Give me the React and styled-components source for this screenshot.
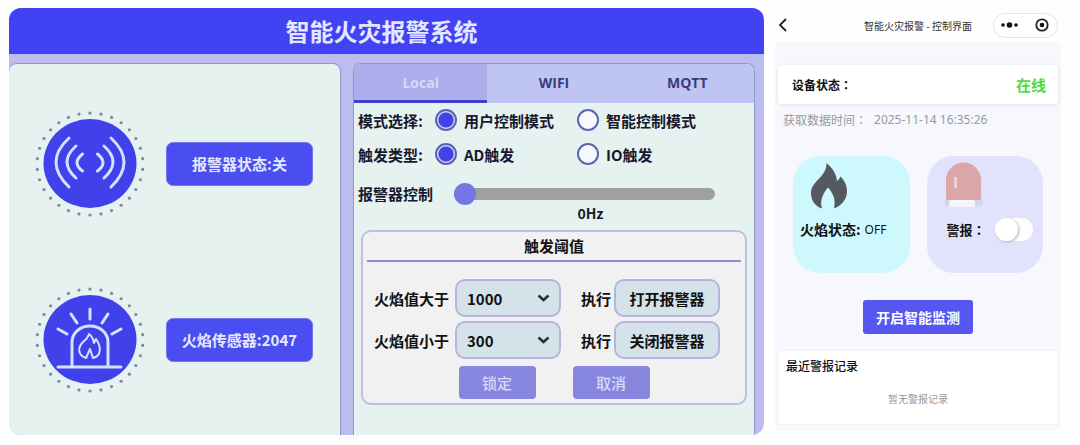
import React, { useState } from 'react';
import styled, { createGlobalStyle } from 'styled-components';

const GlobalStyle = createGlobalStyle`
    * {
        box-sizing: border-box;
    }
    body {
        margin: 0;
        background: #fefefe;
        font-family: 'Noto Sans CJK SC', sans-serif;
        color: #16182e;
    }
    button, input, select {
        margin: 0;
        padding: 0;
        border: 0;
        font-family: inherit;
        color: inherit;
    }
    h1, h2, p {
        margin: 0;
    }
`;

const Page = styled.main`
    display: grid;
    grid-template-columns: 755fr 286fr;
    gap: 11px;
    min-height: 100vh;
    padding: 8px 19px 10px 9px;
`;

/* desktop panel */

const Desktop = styled.section`
    display: flex;
    flex-direction: column;
    overflow: hidden;
    border-radius: 12px;
    background: #bbbdef;
`;
const DesktopTitle = styled.h1`
    height: 46px;
    padding-right: 10px;
    background: #4142f3;
    color: #e3e8ff;
    font-size: 24px;
    font-weight: 700;
    line-height: 46px;
    text-align: center;
`;
const Columns = styled.div`
    flex: 1;
    display: grid;
    grid-template-columns: 332fr 402fr;
    gap: 12px;
    padding: 9px 9px 0 0;
`;
const Pane = styled.div`
    overflow: hidden;
    border: 1px solid #9496ca;
    border-bottom: 0;
    border-radius: 8px 8px 0 0;
    background: #e5f2ef;
`;
const MonitorPane = styled(Pane)`
    display: flex;
    flex-direction: column;
    gap: 70px;
    padding: 47px 27px 0;
    border-left: 0;
`;
const Monitor = styled.div`
    display: flex;
    align-items: center;
    gap: 22px;
`;
const MonitorDrawing = styled.svg`
    flex: none;
    width: 108px;
    height: 106px;
`;
const MonitorState = styled.p`
    flex: 1;
    height: 44px;
    border: 1px solid #7577ee;
    border-radius: 7px;
    background: #4a4df0;
    color: #e4e9ff;
    font-size: 15px;
    font-weight: 700;
    line-height: 42px;
    text-align: center;
    white-space: nowrap;
`;

const Tabs = styled.div`
    display: grid;
    grid-template-columns: repeat(3, 1fr);
    height: 39px;
`;
const Tab = styled.button`
    border-bottom: 3px solid ${({ $active }) => ($active ? '#3c3fd0' : '#bfc5f3')};
    background: ${({ $active }) => ($active ? '#abaeea' : '#bfc5f3')};
    color: ${({ $active }) => ($active ? '#d3daf8' : '#3a3c78')};
    font-family: 'Open Sans', sans-serif;
    font-size: 14px;
    font-weight: 700;
    cursor: pointer;
`;
const Settings = styled.div`
    padding: 0 7px 0 4px;
    font-size: 15px;
    font-weight: 700;
`;
const RadioRow = styled.div`
    display: grid;
    grid-template-columns: 77px 142px 1fr;
    align-items: center;
    height: 34px;
    white-space: nowrap;
`;
const RadioLabel = styled.label`
    display: flex;
    align-items: center;
    gap: 7px;
    cursor: pointer;
`;
const Radio = styled.input`
    appearance: none;
    width: 22px;
    height: 22px;
    border: 2px solid #6063b4;
    border-radius: 50%;
    background: #f6f9fd;
    &:checked {
        background: radial-gradient(circle, #4143e4 0 7px, #ccd4f4 8px);
    }
`;
const SliderRow = styled.div`
    display: grid;
    grid-template-columns: 96px 1fr;
    align-items: center;
    margin-top: 12px;
    padding-right: 32px;
    line-height: 22px;
`;
const Slider = styled.input`
    appearance: none;
    width: 100%;
    height: 22px;
    background: transparent;
    &::-webkit-slider-runnable-track {
        height: 12px;
        border-radius: 6px;
        background: #a0a09f;
    }
    &::-webkit-slider-thumb {
        appearance: none;
        width: 22px;
        height: 22px;
        margin-top: -5px;
        border-radius: 50%;
        background: #7476e4;
    }
`;
const SliderValue = styled.output`
    grid-column: 2;
    padding-left: 12px;
    font-size: 14px;
    line-height: 16px;
    text-align: center;
`;
const Threshold = styled.section`
    margin: 9px 0 0 3px;
    padding: 0 4px 4px;
    border: 2px solid #bfbde5;
    border-radius: 10px;
    background: #f1f1f1;
    color: #111;
`;
const ThresholdTitle = styled.h2`
    height: 30px;
    border-bottom: 2px solid #8c8cd3;
    font-size: 15px;
    font-weight: 700;
    line-height: 28px;
    text-align: center;
`;
const Rules = styled.div`
    display: grid;
    gap: 4px;
    margin-top: 17px;
    padding: 0 21px 0 7px;
`;
const Rule = styled.div`
    display: grid;
    grid-template-columns: 81px 1fr 53px 1fr;
    align-items: center;
    white-space: nowrap;
`;
const SelectBox = styled.div`
    display: grid;
    align-items: center;
    > * {
        grid-area: 1 / 1;
    }
    svg {
        justify-self: end;
        margin-right: 11px;
        pointer-events: none;
    }
`;
const Select = styled.select`
    appearance: none;
    width: 100%;
    height: 38px;
    padding: 0 10px;
    border: 2px solid #b5b4df;
    border-radius: 10px;
    background: #d4e2e9;
    font-size: 15px;
    font-weight: 700;
`;
const Then = styled.span`
    padding-left: 20px;
`;
const ActionButton = styled.button`
    height: 38px;
    border: 2px solid #b5b4df;
    border-radius: 10px;
    background: #d4e2e9;
    font-size: 15px;
    font-weight: 700;
    cursor: pointer;
`;
const Confirm = styled.div`
    display: flex;
    justify-content: center;
    gap: 37px;
    margin-top: 7px;
`;
const ConfirmButton = styled.button`
    width: 77px;
    height: 33px;
    border-radius: 4px;
    background: #8787df;
    color: #d8daf8;
    font-size: 15px;
    font-weight: 500;
    cursor: pointer;
`;

/* phone panel */

const Phone = styled.section`
    align-self: start;
    color: #111;
`;
const PhoneNav = styled.header`
    display: grid;
    grid-template-columns: 1fr auto 1fr;
    align-items: center;
    height: 34px;
    padding: 0 3px;
`;
const BackButton = styled.button`
    display: flex;
    justify-self: start;
    background: none;
    cursor: pointer;
`;
const PhoneTitle = styled.h2`
    color: #333;
    font-size: 10px;
    font-weight: 400;
`;
const Capsule = styled.div`
    display: flex;
    align-items: center;
    justify-content: space-between;
    justify-self: end;
    width: 65px;
    height: 25px;
    padding: 0 8px 0 6px;
    border: 1px solid #e4e4e6;
    border-radius: 13px;
    background: #fff;
`;
const CapsuleButton = styled.button`
    display: flex;
    background: none;
    cursor: pointer;
`;
const Screen = styled.div`
    padding: 23px 3px 5px;
    background: #f6f8fd;
`;
const DeviceCard = styled.div`
    display: flex;
    align-items: center;
    justify-content: space-between;
    height: 39px;
    padding: 0 12px 0 14px;
    border-radius: 4px;
    background: #fff;
    box-shadow: 0 1px 4px #dfe3ec;
    font-size: 12px;
    font-weight: 700;
`;
const Online = styled.span`
    color: #4fdc42;
    font-size: 15px;
    font-weight: 700;
`;
/* full-width colon set in the middle of its square */
const Colon = styled.span`
    font-family: 'Noto Sans CJK TC', sans-serif;
`;
const Fetched = styled.p`
    display: flex;
    gap: 7px;
    padding-left: 5px;
    color: #979a9f;
    font-size: 12px;
    line-height: 32px;
    white-space: nowrap;
`;
const Time = styled.time`
    font-family: 'Noto Sans', sans-serif;
`;
const Tiles = styled.div`
    display: grid;
    grid-template-columns: 1fr 1fr;
    gap: 17px;
    margin: 20px 15px 0;
`;
const Tile = styled.div`
    height: 117px;
    padding: ${({ $alarm }) => ($alarm ? '6px 10px 0 18px' : '6px 7px 0')};
    border-radius: 27px;
    background: ${({ $alarm }) => ($alarm ? '#e3e2fd' : '#cdf9fe')};
`;
const TileLine = styled.div`
    display: flex;
    align-items: center;
    justify-content: ${({ $spread }) => ($spread ? 'space-between' : 'flex-start')};
    gap: 4px;
    height: 24px;
    margin-top: 7px;
    padding-left: ${({ $spread }) => ($spread ? '2px' : '0')};
    font-size: ${({ $spread }) => ($spread ? '13px' : '14px')};
    font-weight: 700;
    white-space: nowrap;
`;
const FlameValue = styled.span`
    font-family: 'Noto Sans', sans-serif;
    font-size: 12px;
    font-weight: 400;
`;
const TileDrawing = styled.svg`
    display: block;
    width: 38px;
    height: 48px;
    margin-left: ${({ $alarm }) => ($alarm ? '0' : '10px')};
`;
const Switch = styled.input`
    appearance: none;
    display: flex;
    align-items: center;
    flex: none;
    width: 38px;
    height: 23px;
    border-radius: 12px;
    background: #fdfdff;
    cursor: pointer;
    &::before {
        content: '';
        width: 23px;
        height: 23px;
        border-radius: 50%;
        background: #fff;
        box-shadow: 1px 1px 3px #b5b5c8;
    }
    &:checked {
        justify-content: flex-end;
        background: #5a5cf0;
    }
`;
const StartButton = styled.button`
    display: block;
    height: 34px;
    margin: 27px auto 0;
    padding: 0 13px;
    border-radius: 3px;
    background: #5656f0;
    color: #fff;
    font-size: 14px;
    font-weight: 700;
    cursor: pointer;
`;
const Records = styled.section`
    height: 75px;
    margin-top: 16px;
    padding: 5px 7px;
    border: 1px solid #eff5fb;
    background: #fff;
`;
const RecordsTitle = styled.h2`
    font-size: 12px;
    font-weight: 500;
    line-height: 20px;
`;
const NoRecords = styled.p`
    margin-top: 13px;
    color: #999;
    font-size: 10px;
    line-height: 20px;
    text-align: center;
`;

const DOTS = Array.from({ length: 30 }, (_, i) => (i * Math.PI) / 15);

const Badge = ({ children }) => (
    <MonitorDrawing viewBox="0 0 108 106" aria-hidden="true">
        {DOTS.map(a => (
            <circle
                key={a}
                cx={54 + 53 * Math.sin(a)}
                cy={53 - 51 * Math.cos(a)}
                r="1.6"
                fill="#7f86a4"
            />
        ))}
        <ellipse cx="54" cy="52.500" rx="46.500" ry="44.500" fill="#4041eb" />
        <g fill="none" stroke="#d5e2ff" strokeWidth="3" strokeLinecap="round" strokeLinejoin="round">
            {children}
        </g>
    </MonitorDrawing>
);

const Chevron = () => (
    <svg width="13" height="8" viewBox="0 0 13 8" aria-hidden="true">
        <path d="M1.500 1.500l5 4.500 5-4.500" fill="none" stroke="#24323c" strokeWidth="2.500" />
    </svg>
);

const RuleRow = ({ id, label, value, values, action }) => {
    const [limit, setLimit] = useState(value);

    return (
        <Rule>
            <label htmlFor={id}>{label}</label>
            <SelectBox>
                <Select id={id} value={limit} onChange={e => setLimit(e.target.value)}>
                    {values.map(v => <option key={v}>{v}</option>)}
                </Select>
                <Chevron />
            </SelectBox>
            <Then>执行</Then>
            <ActionButton type="button">{action}</ActionButton>
        </Rule>
    );
};

const ControlPane = () => {
    const [tab, setTab] = useState('Local');
    const [hz, setHz] = useState(0);

    return (
        <Pane>
            <Tabs role="tablist">
                {['Local', 'WIFI', 'MQTT'].map(name => (
                    <Tab
                        key={name}
                        type="button"
                        role="tab"
                        aria-selected={tab === name}
                        $active={tab === name}
                        onClick={() => setTab(name)}
                    >
                        {name}
                    </Tab>
                ))}
            </Tabs>
            <Settings>
                <RadioRow role="radiogroup" aria-labelledby="mode">
                    <span id="mode">模式选择:</span>
                    <RadioLabel><Radio type="radio" name="mode" defaultChecked />用户控制模式</RadioLabel>
                    <RadioLabel><Radio type="radio" name="mode" />智能控制模式</RadioLabel>
                </RadioRow>
                <RadioRow role="radiogroup" aria-labelledby="trigger">
                    <span id="trigger">触发类型:</span>
                    <RadioLabel><Radio type="radio" name="trigger" defaultChecked />AD触发</RadioLabel>
                    <RadioLabel><Radio type="radio" name="trigger" />IO触发</RadioLabel>
                </RadioRow>
                <SliderRow>
                    <label htmlFor="hz">报警器控制</label>
                    <Slider id="hz" type="range" value={hz} onChange={e => setHz(e.target.value)} />
                    <SliderValue htmlFor="hz">{hz}Hz</SliderValue>
                </SliderRow>
                <Threshold>
                    <ThresholdTitle>触发阈值</ThresholdTitle>
                    <Rules>
                        <RuleRow id="above" label="火焰值大于" value="1000" values={['1000', '2000']} action="打开报警器" />
                        <RuleRow id="below" label="火焰值小于" value="300" values={['300', '500']} action="关闭报警器" />
                    </Rules>
                    <Confirm>
                        <ConfirmButton type="button">锁定</ConfirmButton>
                        <ConfirmButton type="button">取消</ConfirmButton>
                    </Confirm>
                </Threshold>
            </Settings>
        </Pane>
    );
};

const PhonePanel = () => {
    const [alarm, setAlarm] = useState(false);

    return (
        <Phone>
            <PhoneNav>
                <BackButton type="button" aria-label="返回">
                    <svg width="10" height="16" viewBox="0 0 10 16">
                        <path d="M8 2L2 8l6 6" fill="none" stroke="#222" strokeWidth="1.800" />
                    </svg>
                </BackButton>
                <PhoneTitle>智能火灾报警 - 控制界面</PhoneTitle>
                <Capsule>
                    <CapsuleButton type="button" aria-label="更多">
                        <svg width="19" height="8" viewBox="0 0 19 8" fill="#111">
                            <circle cx="3" cy="4" r="1.800" />
                            <circle cx="9.500" cy="4" r="2.800" />
                            <circle cx="16" cy="4" r="1.800" />
                        </svg>
                    </CapsuleButton>
                    <CapsuleButton type="button" aria-label="关闭">
                        <svg width="14" height="14" viewBox="0 0 14 14">
                            <circle cx="7" cy="7" r="5.700" fill="none" stroke="#222" strokeWidth="1.800" />
                            <circle cx="7" cy="7" r="2.300" fill="#111" />
                        </svg>
                    </CapsuleButton>
                </Capsule>
            </PhoneNav>
            <Screen>
                <DeviceCard>
                    <span>设备状态<Colon>：</Colon></span>
                    <Online>在线</Online>
                </DeviceCard>
                <Fetched>
                    <span>获取数据时间<Colon>：</Colon></span>
                    <Time dateTime="2025-11-14T16:35:26">2025-11-14 16:35:26</Time>
                </Fetched>
                <Tiles>
                    <Tile>
                        <TileDrawing viewBox="0 0 38 48" aria-hidden="true">
                            <path
                                d="M16.500 1c6 5 10 11 10.500 18 1.500-1 2.500-2.500 3.500-4.500 4 4 6.500 9 6.500 14.500 0 8-5 14.500-13 17.500 2-8-.500-15-6-21-5 6-8.500 13-6 21C4.500 44 1 38 1 31 1 19 17 15 16.500 1z"
                                fill="#56585f"
                            />
                        </TileDrawing>
                        <TileLine>
                            <span>火焰状态:</span>
                            <FlameValue>OFF</FlameValue>
                        </TileLine>
                    </Tile>
                    <Tile $alarm>
                        <TileDrawing viewBox="0 0 38 48" $alarm aria-hidden="true">
                            <rect x="0" y="37" width="38" height="7" rx="3" fill="#d2d3ef" />
                            <path d="M1 36V18a17.500 17.500 0 0 1 35 0v18q0 2-2 2H3q-2 0-2-2z" fill="#dba6a7" />
                            <rect x="4" y="38" width="26" height="7" rx="2" fill="#f7f5fc" />
                            <rect x="9" y="15" width="3" height="11" rx="1" fill="#f3d0d8" />
                        </TileDrawing>
                        <TileLine $spread>
                            <label htmlFor="alarm">警报<Colon>：</Colon></label>
                            <Switch
                                id="alarm"
                                type="checkbox"
                                role="switch"
                                checked={alarm}
                                onChange={() => setAlarm(!alarm)}
                            />
                        </TileLine>
                    </Tile>
                </Tiles>
                <StartButton type="button">开启智能监测</StartButton>
                <Records>
                    <RecordsTitle>最近警报记录</RecordsTitle>
                    <NoRecords>暂无警报记录</NoRecords>
                </Records>
            </Screen>
        </Phone>
    );
};

const App = () => (
    <>
        <GlobalStyle />
        <Page>
            <Desktop>
                <DesktopTitle>智能火灾报警系统</DesktopTitle>
                <Columns>
                    <MonitorPane>
                        <Monitor>
                            <Badge>
                                <path d="M33 27q-26 24 0 49M40 35q-18 16 0 32M46.500 43q-11 9 0 17" />
                                <path d="M75 27q26 24 0 49M68 35q18 16 0 32M61.500 43q11 9 0 17" />
                            </Badge>
                            <MonitorState>报警器状态:关</MonitorState>
                        </Monitor>
                        <Monitor>
                            <Badge>
                                <path d="M22 80H85M36 79V55a18 16 0 0 1 36 0v24" />
                                <path d="M54 22v10M35 27l6 9M72 27l-6 9M22 42l9 5M85 42l-9 5" />
                                <path
                                    d="M50 71c-9-3-8-11-3-16q5-4 6-8 4 3 5 9l2-4c5 7 6 17-3 19l-3-9-4 9z"
                                    strokeWidth="2"
                                />
                            </Badge>
                            <MonitorState>火焰传感器:2047</MonitorState>
                        </Monitor>
                    </MonitorPane>
                    <ControlPane />
                </Columns>
            </Desktop>
            <PhonePanel />
        </Page>
    </>
);

export default App;
